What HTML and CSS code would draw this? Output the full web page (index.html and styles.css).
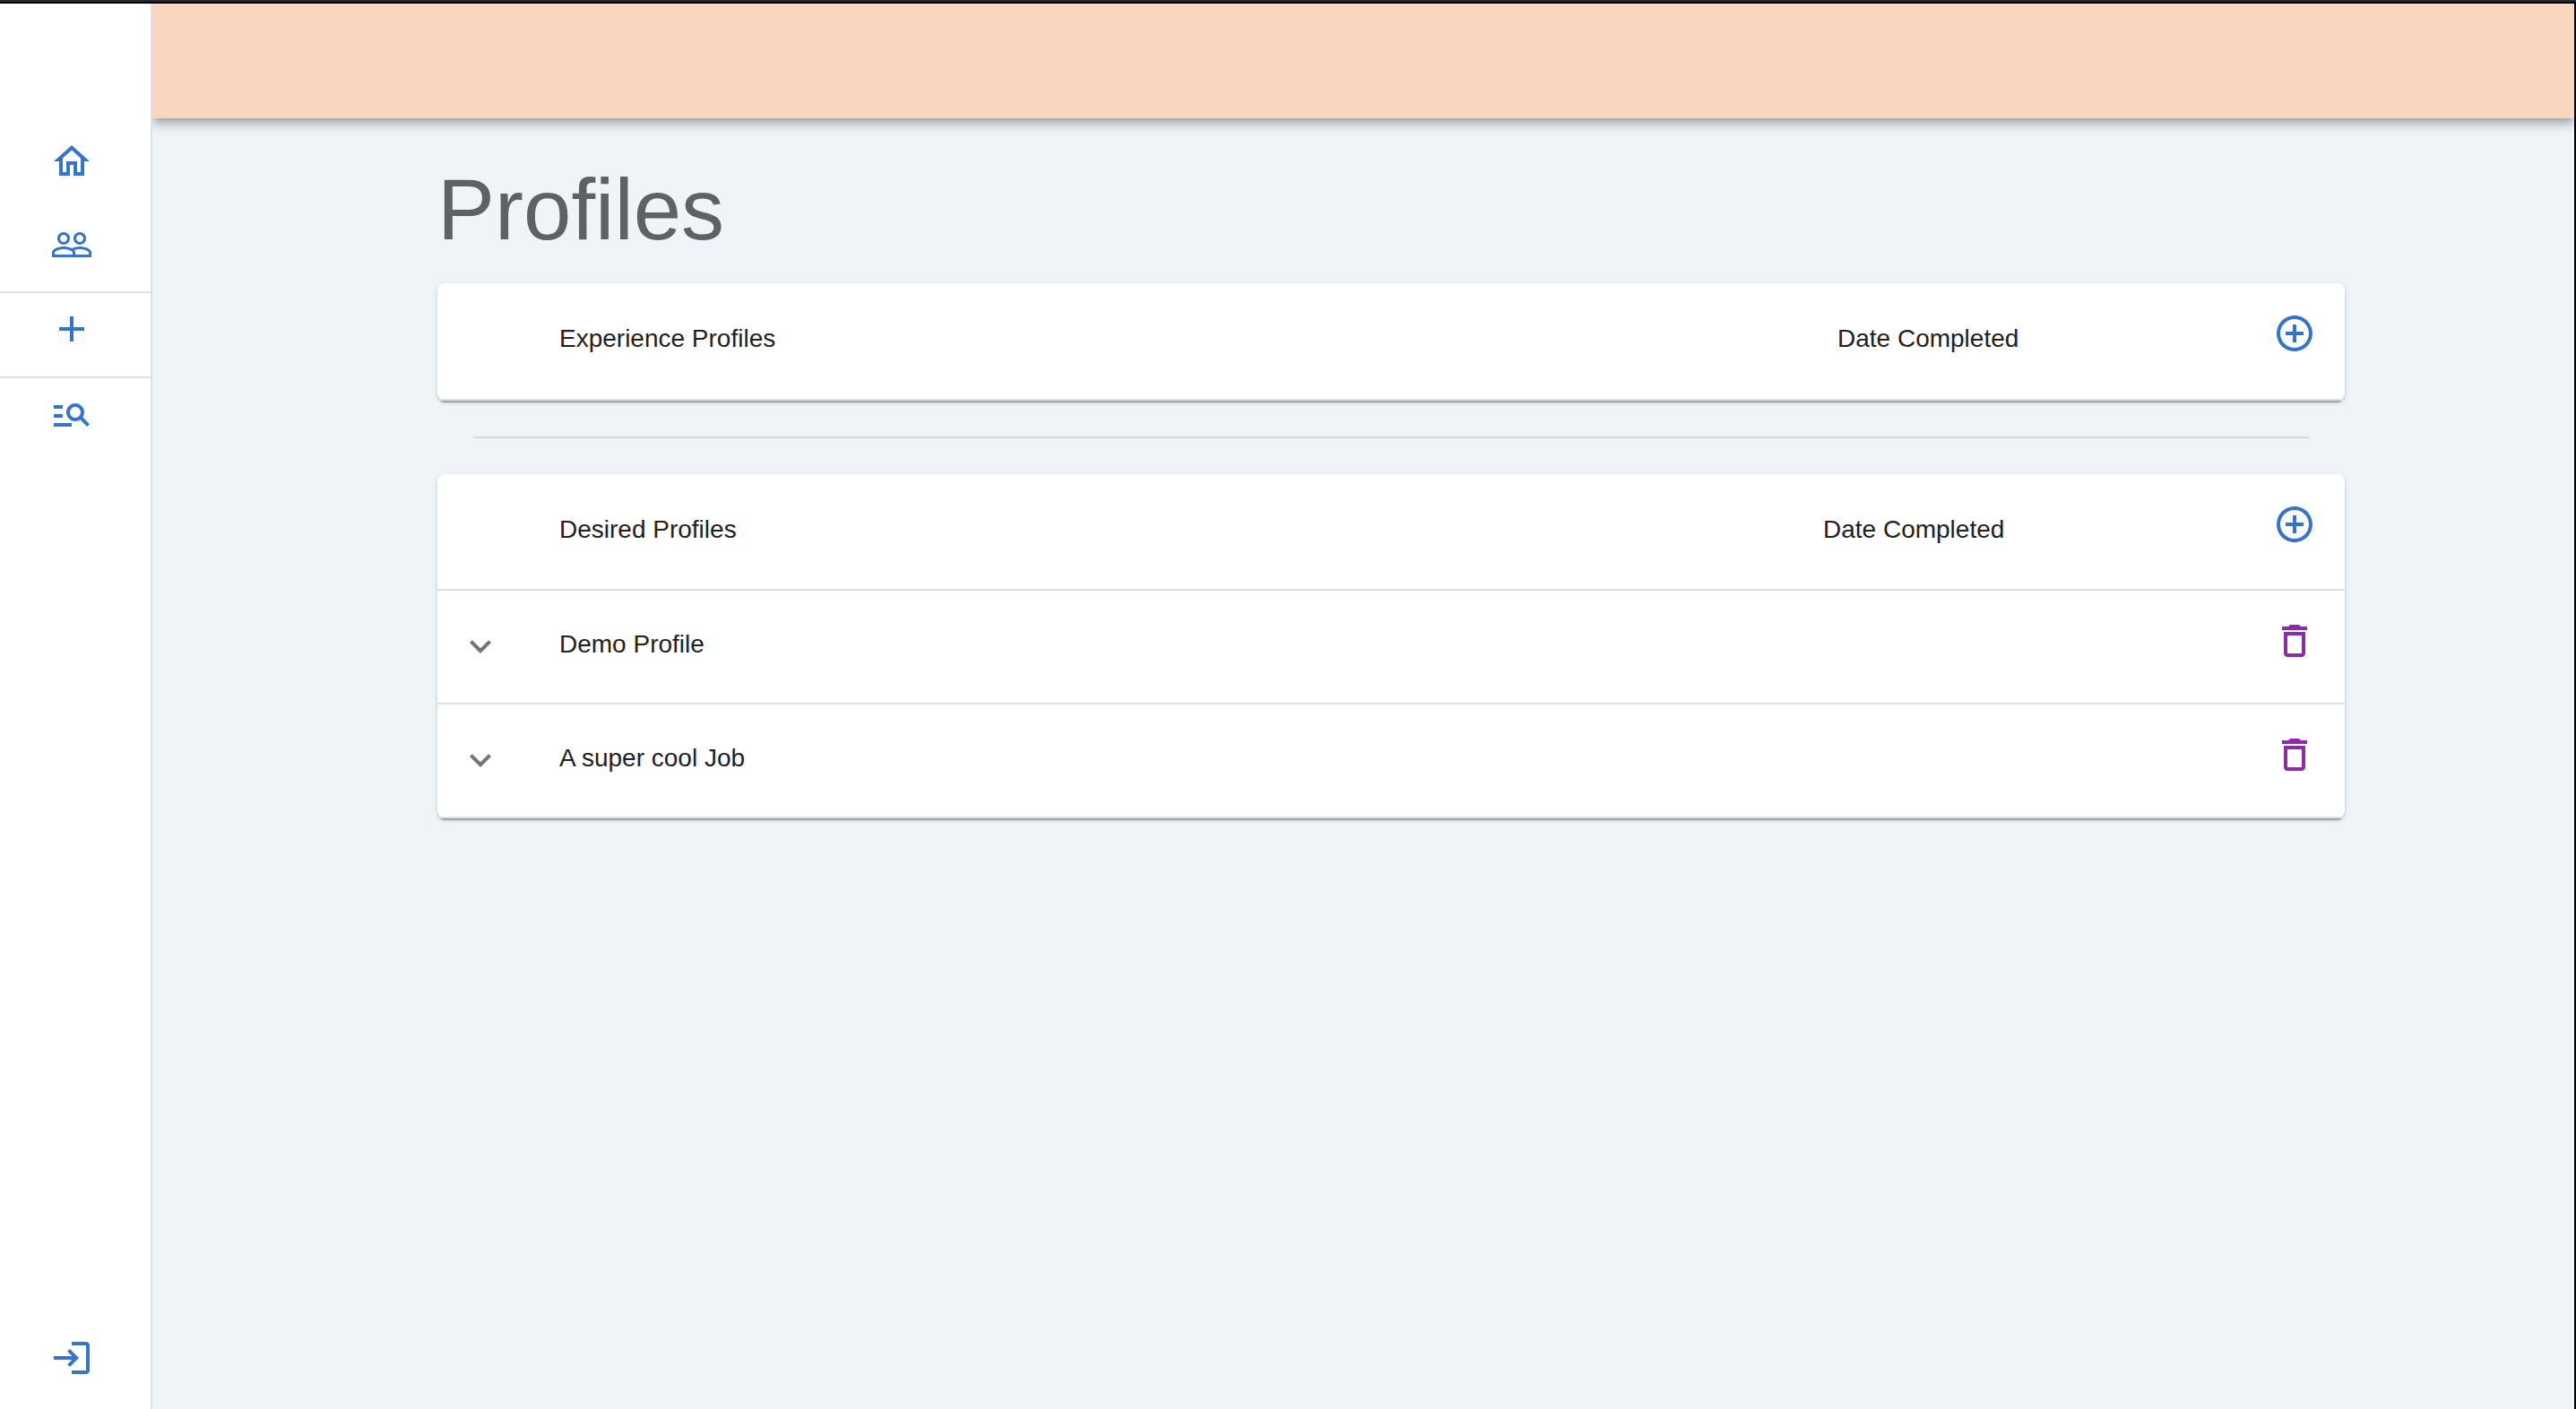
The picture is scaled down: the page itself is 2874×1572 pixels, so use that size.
FILE: index.html
```html
<!DOCTYPE html>
<html lang="en">
<head>
  <meta charset="utf-8">
  <title>Profiles</title>
  <link rel="stylesheet" href="styles.css">
</head>
<body>
  <svg class="sprite" aria-hidden="true">
    <symbol id="i-home" viewBox="0 0 24 24"><path d="m12 5.69 5 4.5V18h-2v-6H9v6H7v-7.81l5-4.5M12 3 2 12h3v8h6v-6h2v6h6v-8h3L12 3z"/></symbol>
    <symbol id="i-people" viewBox="0 0 24 24"><path d="M16.5 13c-1.2 0-3.07.34-4.5 1-1.43-.67-3.3-1-4.5-1C5.33 13 1 14.08 1 16.25V19h22v-2.75c0-2.17-4.33-3.25-6.5-3.25zm-4 4.5h-10v-1.25c0-.54 2.56-1.75 5-1.75s5 1.21 5 1.75v1.25zm9 0H14v-1.25c0-.46-.2-.86-.52-1.22.88-.3 1.96-.53 3.02-.53 2.44 0 5 1.21 5 1.75v1.25zM7.5 12c1.93 0 3.5-1.57 3.5-3.5S9.43 5 7.5 5 4 6.57 4 8.5 5.57 12 7.5 12zm0-5.5c1.1 0 2 .9 2 2s-.9 2-2 2-2-.9-2-2 .9-2 2-2zm9 5.5c1.93 0 3.5-1.57 3.5-3.5S18.43 5 16.5 5 13 6.57 13 8.5s1.57 3.5 3.5 3.5zm0-5.5c1.1 0 2 .9 2 2s-.9 2-2 2-2-.9-2-2 .9-2 2-2z"/></symbol>
    <symbol id="i-add" viewBox="0 0 24 24"><path d="M19 13h-6v6h-2v-6H5v-2h6V5h2v6h6v2z"/></symbol>
    <symbol id="i-search" viewBox="0 0 24 24"><path d="M7 9H2V7h5v2zm0 3H2v2h5v-2zm13.59 7-3.83-3.83c-.8.52-1.74.83-2.76.83-2.76 0-5-2.24-5-5s2.24-5 5-5 5 2.24 5 5c0 1.02-.31 1.96-.83 2.75L22 17.59 20.59 19zM17 11c0-1.65-1.35-3-3-3s-3 1.35-3 3 1.35 3 3 3 3-1.35 3-3zM2 19h10v-2H2v2z"/></symbol>
    <symbol id="i-login" viewBox="0 0 24 24"><path d="M11 7 9.6 8.4l2.6 2.6H2v2h10.2l-2.6 2.6L11 17l5-5-5-5zm9 12h-8v2h8c1.1 0 2-.9 2-2V5c0-1.1-.9-2-2-2h-8v2h8v14z"/></symbol>
    <symbol id="i-add-circle" viewBox="0 0 24 24"><path d="M13 7h-2v4H7v2h4v4h2v-4h4v-2h-4V7zm-1-5C6.48 2 2 6.48 2 12s4.48 10 10 10 10-4.48 10-10S17.52 2 12 2zm0 18c-4.41 0-8-3.59-8-8s3.59-8 8-8 8 3.59 8 8-3.59 8-8 8z"/></symbol>
    <symbol id="i-delete" viewBox="0 0 24 24"><path d="M6 19c0 1.1.9 2 2 2h8c1.1 0 2-.9 2-2V7H6v12zM8 9h8v10H8V9zm7.5-5-1-1h-5l-1 1H5v2h14V4z"/></symbol>
    <symbol id="i-down" viewBox="0 0 24 24"><path d="M7.41 8.59 12 13.17l4.59-4.58L18 10l-6 6-6-6 1.41-1.41z"/></symbol>
  </svg>

  <div class="app">
    <nav class="sidebar" aria-label="Main">
      <div class="nav-group nav-group-main">
        <a class="nav-link" href="#home" aria-label="Home"><svg class="icon"><use href="#i-home"/></svg></a>
        <a class="nav-link" href="#people" aria-label="People"><svg class="icon"><use href="#i-people"/></svg></a>
      </div>
      <div class="nav-group nav-group-new">
        <a class="nav-link" href="#new" aria-label="New"><svg class="icon"><use href="#i-add"/></svg></a>
      </div>
      <div class="nav-group">
        <a class="nav-link" href="#search" aria-label="Search"><svg class="icon"><use href="#i-search"/></svg></a>
      </div>
      <div class="nav-group nav-group-end">
        <a class="nav-link" href="#login" aria-label="Log in"><svg class="icon"><use href="#i-login"/></svg></a>
      </div>
    </nav>

    <div class="page">
      <header class="app-bar"></header>
      <main class="content">
        <h1 class="title">Profiles</h1>

        <table class="card experience">
          <colgroup><col class="col-toggle"><col><col class="col-date"><col class="col-action"></colgroup>
          <thead>
            <tr>
              <td></td>
              <th scope="col">Experience Profiles</th>
              <th scope="col">Date Completed</th>
              <td class="action"><button class="icon-button" type="button" aria-label="Add experience profile"><svg class="icon"><use href="#i-add-circle"/></svg></button></td>
            </tr>
          </thead>
        </table>

        <hr class="divider">

        <table class="card desired">
          <colgroup><col class="col-toggle"><col><col class="col-date"><col class="col-action"></colgroup>
          <thead>
            <tr>
              <td></td>
              <th scope="col">Desired Profiles</th>
              <th scope="col">Date Completed</th>
              <td class="action"><button class="icon-button" type="button" aria-label="Add desired profile"><svg class="icon"><use href="#i-add-circle"/></svg></button></td>
            </tr>
          </thead>
          <tbody>
            <tr>
              <td class="toggle"><button class="icon-button expand" type="button" aria-label="Expand Demo Profile"><svg class="icon"><use href="#i-down"/></svg></button></td>
              <td>Demo Profile</td>
              <td></td>
              <td class="action"><button class="icon-button delete" type="button" aria-label="Delete Demo Profile"><svg class="icon"><use href="#i-delete"/></svg></button></td>
            </tr>
            <tr>
              <td class="toggle"><button class="icon-button expand" type="button" aria-label="Expand A super cool Job"><svg class="icon"><use href="#i-down"/></svg></button></td>
              <td>A super cool Job</td>
              <td></td>
              <td class="action"><button class="icon-button delete" type="button" aria-label="Delete A super cool Job"><svg class="icon"><use href="#i-delete"/></svg></button></td>
            </tr>
          </tbody>
        </table>
      </main>
    </div>
  </div>
</body>
</html>
```
FILE: styles.css
```css
:root {
  --primary: #3574cd;
  --secondary: #8c2da8;
  --line: #e0e0e0;
}

* {
  box-sizing: border-box;
}

body {
  margin: 0;
  background: #eef4f8;
  color: #212121;
  font-family: "Liberation Sans", Arial, Helvetica, sans-serif;
  font-size: 28px;
  line-height: 40px;
}

.sprite {
  display: none;
}

.icon {
  display: block;
  width: 48px;
  height: 48px;
  fill: currentColor;
}

/* Dark window frame along the top and right edges */
.app {
  display: flex;
  min-height: 100vh;
  border-top: 4px solid #000;
  border-right: 2px solid #000;
}

.app::before {
  content: "";
  position: absolute;
  top: 0;
  left: 0;
  right: 0;
  height: 2px;
  background: #2a2a35;
}

/* Sidebar */
.sidebar {
  position: relative;
  z-index: 2;
  display: flex;
  flex: none;
  flex-direction: column;
  width: 170px;
  padding-top: 136px;
  background: #fff;
  border-right: 2px solid var(--line);
}

.nav-group {
  display: flex;
  flex-direction: column;
  gap: 45px;
  padding: 16px 0 29px 56px;
}

.nav-group-main {
  padding-bottom: 28px;
}

.nav-group-new {
  border-top: 2px solid var(--line);
  border-bottom: 2px solid var(--line);
}

.nav-group-end {
  margin-top: auto;
  padding-bottom: 33px;
}

.nav-link {
  align-self: flex-start;
  color: var(--primary);
}

/* Page */
.page {
  flex: 1;
  min-width: 0;
}

.app-bar {
  position: relative;
  height: 128px;
  background: #f9d7be;
  box-shadow:
    0 4px 8px -2px rgba(0, 0, 0, 0.2),
    0 8px 10px rgba(0, 0, 0, 0.14),
    0 2px 20px rgba(0, 0, 0, 0.12);
}

.content {
  padding: 46px 256px 48px 318px;
}

.title {
  margin: 0 0 26px;
  color: #5f6163;
  font-size: 96px;
  font-weight: 400;
  line-height: 112px;
}

/* Cards */
.card {
  width: 100%;
  table-layout: fixed;
  border-collapse: separate;
  border-spacing: 0;
  background: #fff;
  border-radius: 8px;
  box-shadow:
    0 4px 2px -2px rgba(0, 0, 0, 0.2),
    0 2px 2px rgba(0, 0, 0, 0.14),
    0 2px 6px rgba(0, 0, 0, 0.12);
}

.card th,
.card td {
  height: 127px;
  padding: 40px 32px 32px;
  border-bottom: 2px solid var(--line);
  font-weight: 400;
  text-align: left;
  vertical-align: top;
}

.card thead th,
.card thead td {
  height: 130px;
  padding-top: 42px;
}

.card.experience th,
.card.experience td {
  height: 131px;
}

.card .action,
.card thead .action {
  padding-top: 32px;
}

.card .toggle {
  padding: 32px 18px;
}

.col-toggle {
  width: 104px;
}

.col-action {
  width: 112px;
}

.experience .col-date {
  width: 486px;
}

.desired .col-date {
  width: 502px;
}

.divider {
  height: 2px;
  margin: 40px;
  border: 0;
  background: #d1d7da;
}

.icon-button {
  display: block;
  padding: 0;
  border: 0;
  background: none;
  color: var(--primary);
  cursor: pointer;
}

.expand {
  padding: 6px;
  color: #757575;
}

.delete {
  color: var(--secondary);
}
```
